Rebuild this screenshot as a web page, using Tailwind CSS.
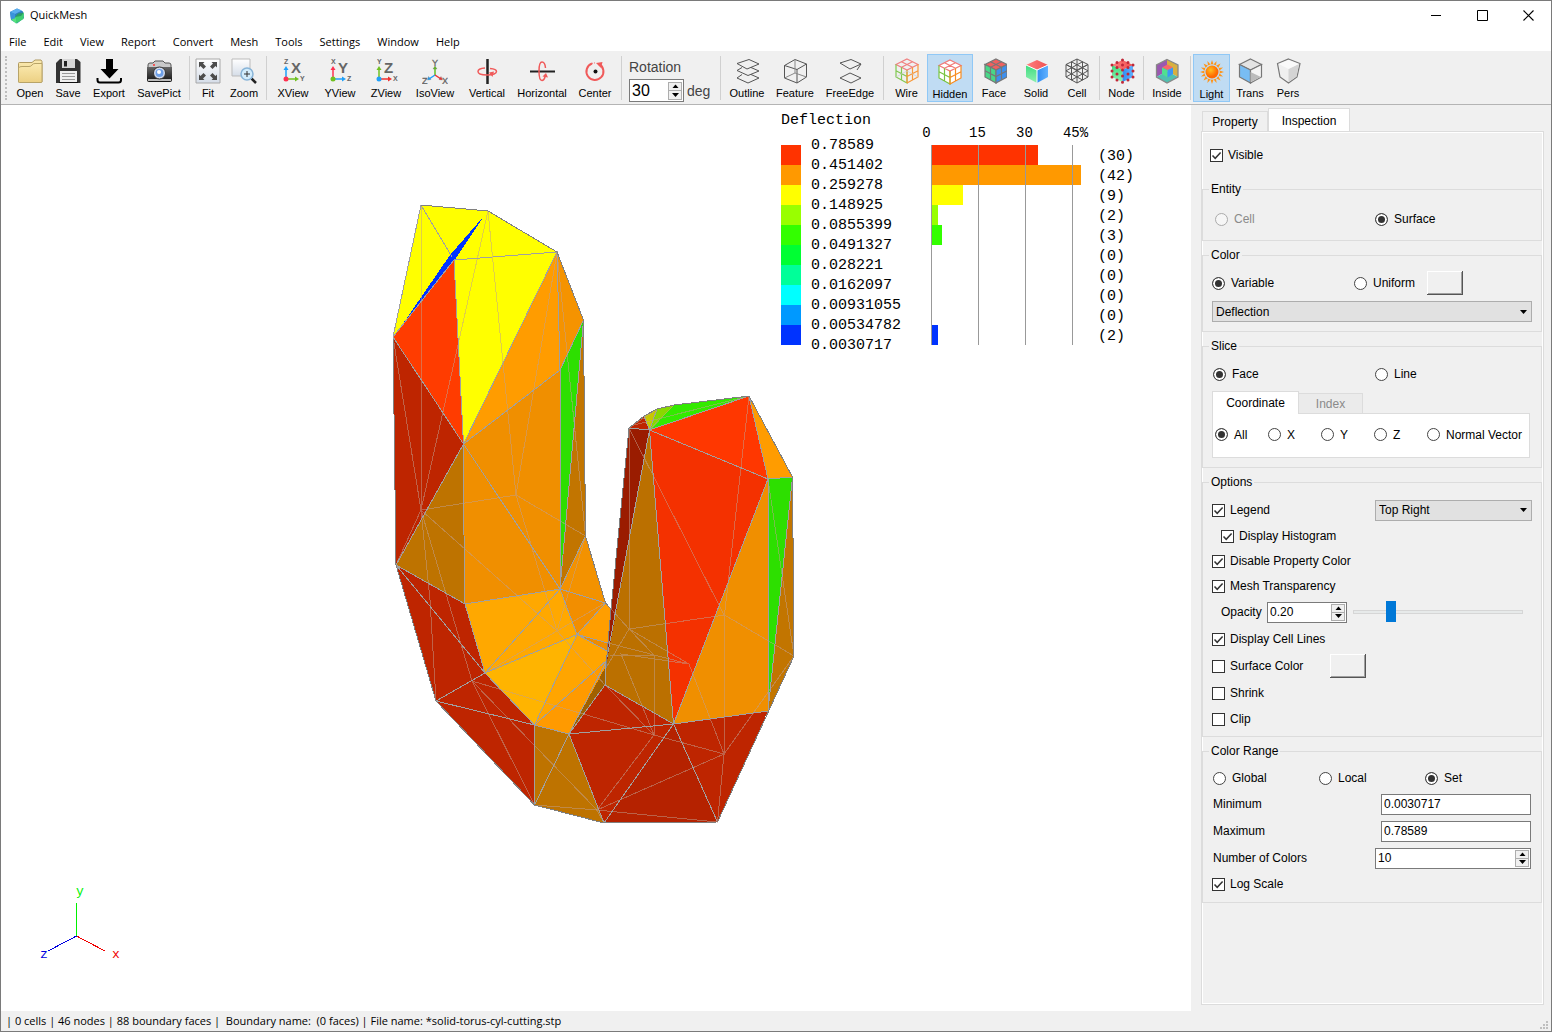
<!DOCTYPE html>
<html lang="en">
<head>
    <meta charset="UTF-8">
    <title>QuickMesh</title>
    <script src="https://cdn.jsdelivr.net/npm/@tailwindcss/browser@4"></script>
</head>
<body class="h-screen flex flex-col border border-[#7a7a7a] bg-white text-black text-xs font-['Liberation_Sans',Arial,sans-serif] overflow-hidden">

    <!-- Shared symbols -->
    <svg class="absolute h-0 w-0" aria-hidden="true">
        <symbol id="check" viewBox="0 0 13 13"><path d="M2.5 6.5 L5.2 9.3 L10.6 3.6" fill="none" stroke="#333" stroke-width="1.5"/></symbol>
        <symbol id="up" viewBox="0 0 7 4"><path d="M0.5 4 L3.5 0.5 L6.5 4z"/></symbol>
        <symbol id="down" viewBox="0 0 7 4"><path d="M0 0 L7 0 L3.5 4z"/></symbol>
        <linearGradient id="folder" x2="0" y2="1"><stop stop-color="#fbeab0"/><stop offset="1" stop-color="#ecd083"/></linearGradient>
        <linearGradient id="camera" x2="0" y2="1"><stop stop-color="#666"/><stop offset="1" stop-color="#111"/></linearGradient>
        <linearGradient id="paper" x2="0" y2="1"><stop stop-color="#fff"/><stop offset="1" stop-color="#d5dde8"/></linearGradient>
        <linearGradient id="red" x1="0" x2="1"><stop stop-color="#ff8080"/><stop offset="1" stop-color="#f05050"/></linearGradient>
        <linearGradient id="green" x2="0" y2="1"><stop stop-color="#3fdc80"/><stop offset="1" stop-color="#8ff0b0"/></linearGradient>
        <linearGradient id="blue" x2="1"><stop stop-color="#2f8cf0"/><stop offset="1" stop-color="#62b2ff"/></linearGradient>
        <radialGradient id="sun" cx=".4" cy=".35"><stop stop-color="#ffc020"/><stop offset="1" stop-color="#ff6a00"/></radialGradient>
    </svg>

    <!-- Title bar -->
    <header class="flex h-[29px] shrink-0 items-center font-['Open_Sans',sans-serif]">
        <svg class="ml-2 h-4 w-4" viewBox="0 0 16 16">
            <path d="M1 4 L8 0.5 L14 3.5 L15 10 L8 15.5 L2 12z" fill="#2f7fc0"/>
            <path d="M1 4 L8 0.5 L13 2.5 L6 6z" fill="#5aaef0"/>
            <path d="M1 4 L6 6 L6 11 L2 11z" fill="#3a94dc"/>
            <path d="M6 9 L15 5 L14.5 11 L7 15.5z" fill="#3fd070"/>
            <path d="M6 9 L9 5.5 L15 4.5 L12 8z" fill="#2b9a66"/>
            <path d="M2 11.5 L7 10 L7 15.5z" fill="#55e080"/>
        </svg>
        <h1 class="ml-[5px] flex-1 text-[11px]">QuickMesh</h1>
        <button aria-label="Minimize" class="flex h-full w-[46px] items-center justify-center"><svg class="h-[11px] w-[11px]" viewBox="0 0 11 11"><path d="M0 5.5 H10" stroke="#000"/></svg></button>
        <button aria-label="Maximize" class="flex h-full w-[46px] items-center justify-center"><svg class="h-[11px] w-[11px]" viewBox="0 0 11 11"><path d="M.5 .5 H10.500 V10.500 H.5z" fill="none" stroke="#000"/></svg></button>
        <button aria-label="Close" class="flex h-full w-[46px] items-center justify-center"><svg class="h-[11px] w-[11px]" viewBox="0 0 11 11"><path d="M.5 .5 L10.500 10.500 M10.500 .5 L.5 10.500" stroke="#000" stroke-width="1.100"/></svg></button>
    </header>

    <!-- Menu bar -->
    <nav class="flex h-[22px] shrink-0 items-center gap-[17px] border-b border-[#f0f0f0] pt-[3px] pl-2 font-['Open_Sans',sans-serif] text-[11px]">
        <button>File</button>
        <button>Edit</button>
        <button>View</button>
        <button>Report</button>
        <button>Convert</button>
        <button>Mesh</button>
        <button>Tools</button>
        <button>Settings</button>
        <button>Window</button>
        <button>Help</button>
    </nav>

    <!-- Toolbar -->
    <div class="flex h-[53px] shrink-0 border-b border-[#b4b4b4] bg-[#f0f0f0] pt-0.5 text-[11px] leading-3 [&>button]:flex [&>button]:h-12 [&>button]:shrink-0 [&>button]:flex-col [&>button]:items-center [&>button]:gap-[3px] [&>button]:pt-1 [&>button>svg]:h-[26px] [&>button>svg]:w-[26px] [&>hr]:mx-0.5 [&>hr]:mt-0.5 [&>hr]:h-11 [&>hr]:w-px [&>hr]:shrink-0 [&>hr]:border-0 [&>hr]:bg-[#d0d0d0]">
        <div class="mr-1 ml-1 mt-0.5 h-11 w-0.5 shrink-0 border-l-2 border-dotted border-[#bdbdbd]"></div>
        <button class="w-[38px]">
            <svg viewBox="0 0 26 26"><path d="M1.500 24 V5.500 Q1.500 4.500 2.500 4.500 H15 L18 2 H24 L25 3.500 V24z" fill="url(#folder)" stroke="#b09a60"/><path d="M1.500 10 Q2 8.500 5 8.500 H12 Q14 8.500 15 7 Q16 5.500 18 5.500 H25 V23.500 Q25 24.500 24 24.500 H2.500 Q1.500 24.500 1.500 23.500z" fill="url(#folder)" stroke="#b8a468"/></svg>
            Open
        </button>
        <button class="w-[38px]">
            <svg viewBox="0 0 26 26"><path d="M1 1 H22 L25.500 4 V25 H1z M1 1 L4 1 V25 H1z" fill="#333"/><path d="M1 1 H5 L1 5z" fill="#f0f0f0"/><path d="M7 1 H20 V10 H7z" fill="#d8d8d8"/><path d="M9 3 H12 V8.500 H9z" fill="#222"/><path d="M5 13 H22 V25 H5z" fill="#efefef"/><path d="M7 15.500 H20 M7 18.500 H20 M7 21.500 H20" stroke="#999"/><path d="M4 24.500 H23" stroke="#111"/></svg>
            Save
        </button>
        <button class="w-11">
            <svg viewBox="0 0 26 26"><path d="M10 1 H17 V11 H22.500 L13.500 20.500 L4.500 11 H10z"/><path d="M1.500 20 V22 Q1.500 24.500 4 24.500 H22.500 Q25 24.500 25 22 V20" fill="none" stroke="#000" stroke-width="2"/></svg>
            Export
        </button>
        <button class="w-14">
            <svg viewBox="0 0 26 26"><path d="M2 7 Q2 5 4 5 H7 L9 3 H17 L19 5 H23 Q25 5 25 7 V12 H2z" fill="#c9c9c9" stroke="#555"/><path d="M1 9 H26 V22 Q26 24 24 24 H3 Q1 24 1 22z" fill="url(#camera)"/><path d="M2 21 H25 V23 H2z" fill="#bbb"/><circle cx="13.500" cy="15" r="6" fill="#d4dcec" stroke="#333"/><circle cx="13.500" cy="15" r="4" fill="#6ea0e8"/><circle cx="13" cy="14" r="2" fill="#fff"/><circle cx="8" cy="7" r="1" fill="#f33"/></svg>
            SavePict
        </button>
        <hr>
        <button class="w-8">
            <svg viewBox="0 0 26 26"><path d="M1 1 H25 V25 H1z" fill="url(#paper)" stroke="#a8a8a8"/><path d="M4 4 H9.500 L8 5.500 L11 8.500 L8.500 11 L5.500 8 L4 9.500z M22 4 H16.500 L18 5.500 L15 8.500 L17.500 11 L20.500 8 L22 9.500z M4 22 H9.500 L8 20.500 L11 17.500 L8.500 15 L5.500 18 L4 16.500z M22 22 H16.500 L18 20.500 L15 17.500 L17.500 15 L20.500 18 L22 16.500z" fill="#4c4c4c"/></svg>
            Fit
        </button>
        <button class="w-10">
            <svg viewBox="0 0 26 26"><path d="M1 1 H19 V18 H1z" fill="url(#paper)" stroke="#bbb"/><path d="M20.500 20.500 L25 25" stroke="#222" stroke-width="2.500"/><circle cx="16" cy="16" r="6" fill="#d2ecfc" stroke="#88b4d8" stroke-width="1.500"/><path d="M13 16 H19 M16 13 V19" stroke="#333"/></svg>
            Zoom
        </button>
        <hr>
        <button class="w-12">
            <svg viewBox="0 0 26 26" class="font-bold" fill="#666"><path d="M6 21 V12" stroke="#20a0f8" stroke-width="1.500"/><path d="M3.500 12 L6 8 L8.500 12z" fill="#20a0f8"/><path d="M6 21 H15" stroke="#70c020" stroke-width="1.500"/><path d="M15 18.500 L19 21 L15 23.500z" fill="#70c020"/><circle cx="6" cy="21" r="2.500" fill="#ff3050"/><text x="11" y="15" font-size="15">X</text><text x="4" y="6" font-size="7">Z</text><text x="20" y="23" font-size="7">Y</text></svg>
            XView
        </button>
        <button class="w-[46px]">
            <svg viewBox="0 0 26 26" class="font-bold" fill="#666"><path d="M6 21 V12" stroke="#ff3050" stroke-width="1.500"/><path d="M3.500 12 L6 8 L8.500 12z" fill="#ff3050"/><path d="M6 21 H15" stroke="#20a0f8" stroke-width="1.500"/><path d="M15 18.500 L19 21 L15 23.500z" fill="#20a0f8"/><circle cx="6" cy="21" r="2.500" fill="#70c020"/><text x="11" y="15" font-size="15">Y</text><text x="4" y="6" font-size="7">X</text><text x="20" y="23" font-size="7">Z</text></svg>
            YView
        </button>
        <button class="w-[46px]">
            <svg viewBox="0 0 26 26" class="font-bold" fill="#666"><path d="M6 21 V12" stroke="#70c020" stroke-width="1.500"/><path d="M3.500 12 L6 8 L8.500 12z" fill="#70c020"/><path d="M6 21 H15" stroke="#f03030" stroke-width="1.500"/><path d="M15 18.500 L19 21 L15 23.500z" fill="#f03030"/><circle cx="6" cy="21" r="2.500" fill="#20a0f8"/><text x="11" y="15" font-size="15">Z</text><text x="4" y="6" font-size="7">Y</text><text x="20" y="23" font-size="7">X</text></svg>
            ZView
        </button>
        <button class="w-13">
            <svg viewBox="0 0 26 26" fill="#666" stroke="#666" stroke-width=".3"><path d="M13 17 V10" stroke="#60c020" stroke-width="1.500"/><path d="M11 11 L13 8 L15 11z" fill="#60c020"/><path d="M13 17 L7 21" stroke="#20a0f8" stroke-width="1.500"/><path d="M5.500 22 L6.500 18.500 L9 21.500z" fill="#20a0f8"/><path d="M13 17 L19 21" stroke="#f03030" stroke-width="1.500"/><path d="M20.500 22 L17 21.500 L19 18.500z" fill="#f03030"/><text x="10" y="7.500" font-size="9">Y</text><text x="0" y="25.500" font-size="9">Z</text><text x="20" y="25.500" font-size="9">X</text></svg>
            IsoView
        </button>
        <button class="w-13">
            <svg viewBox="0 0 26 26" fill="none"><path d="M13.500 1 V26" stroke="#222" stroke-width="2.500"/><path d="M11 10 Q4 10.500 4 13.500 Q4 17 13 17 Q18 17 20 16 M16 10.500 Q22.500 11 22.500 13.500 Q22.500 15 20 16" stroke="#f05a5a" stroke-width="1.500"/><path d="M15 14.500 L20 13.500 L18.500 19z" fill="#f05a5a"/></svg>
            Vertical
        </button>
        <button class="w-[58px]">
            <svg viewBox="0 0 26 26" fill="none"><path d="M1 13.500 H26" stroke="#222" stroke-width="2"/><path d="M16.500 10 Q16 4 13 4 Q10 4 10 13 Q10 22.500 13 22.500 Q15 22.500 16 19 M16.500 17 L16 19" stroke="#f05a5a" stroke-width="1.500"/><path d="M13.500 18.500 L17 15 L19 19.500z" fill="#f05a5a"/></svg>
            Horizontal
        </button>
        <button class="w-12">
            <svg viewBox="0 0 26 26" fill="none"><path d="M17 6 A8.500 8.500 0 1 1 10 5.500" stroke="#f05a5a" stroke-width="2"/><path d="M14 5 L20.500 4 L19 10z" fill="#f05a5a"/><path d="M10 5.500 A8.500 8.500 0 0 1 14 5" stroke="#f05a5a" stroke-dasharray="1 1"/><circle cx="13.500" cy="13.500" r="2" fill="#111"/></svg>
            Center
        </button>
        <hr>
        <!-- Rotation step -->
        <div class="flex w-[94px] shrink-0 flex-col pl-[5px] text-sm text-[#444]">
            <label for="rotation" class="h-[25px] leading-[26px]">Rotation</label>
            <div class="flex items-center gap-[3px]">
                <div class="flex h-[23px] w-[55px] items-center border border-[#7a7a7a] bg-white pr-px">
                    <input id="rotation" type="text" value="30" class="w-full min-w-0 flex-1 pl-0.5 text-base text-black outline-none">
                    <div class="flex w-3.5 shrink-0 flex-col">
                        <button aria-label="Increase rotation" class="flex h-[9px] items-center justify-center border border-[#adadad] bg-[#f0f0f0]"><svg class="h-1 w-[7px]"><use href="#up"/></svg></button>
                        <button aria-label="Decrease rotation" class="flex h-[9px] items-center justify-center border border-t-0 border-[#adadad] bg-[#f0f0f0]"><svg class="h-1 w-[7px]"><use href="#down"/></svg></button>
                    </div>
                </div>
                <span>deg</span>
            </div>
        </div>
        <hr>
        <button class="w-12">
            <svg viewBox="0 0 26 26" fill="none" stroke="#555"><path d="M3 5.500 L15 1.500 L25 6 L13 11z M8 9.500 L3 12.500 L14 17.500 L25 13 L17 9.500 M8 16.500 L3 20 L14 25 L25 20 L17 16.500"/></svg>
            Outline
        </button>
        <button class="w-12">
            <svg viewBox="0 0 26 26" fill="none" stroke="#555"><path d="M2.500 7.500 L13 1.500 L24.500 6 L15 11.500z M2.500 7.500 V20 L15 25 V11.500 M24.500 6 V19 L15 25"/><path d="M13 1.500 V15 L2.500 20 M13 15 L24.500 19" stroke="#888"/></svg>
            Feature
        </button>
        <button class="w-[62px]">
            <svg viewBox="0 0 26 26" fill="none" stroke="#555"><path d="M3 5 L14 1.500 L24 6 L13 11z M3 20 L13 15 L24 20 L14 25z M24 6 L20 12"/></svg>
            FreeEdge
        </button>
        <hr>
        <button class="w-[41px]">
            <svg viewBox="0 0 26 26" fill="none" stroke-width="1.200"><path d="M13 1 L24 6.500 L13 12 L2 6.500z" stroke="#f08080"/><path d="M7.500 3.800 L18.500 9.300 M18.500 3.800 L7.500 9.300" stroke="#f08080"/><path d="M2 6.500 V19 L13 25 V12 M7.500 9.300 V22 M2 12.800 L13 18.500" stroke="#80c850"/><path d="M24 6.500 V19 L13 25 M13 12 V25 M18.500 9.300 V22 M24 12.800 L13 18.500" stroke="#f89838"/><path d="M2 19 L13 13 L24 19" stroke="#ccc" stroke-width=".7"/></svg>
            Wire
        </button>
        <button aria-pressed="true" class="w-[46px] border border-[#90c8f6] bg-[#c0dcf3]">
            <svg viewBox="0 0 26 26" fill="#fff" stroke-width="1.200"><path d="M2 6.500 L13 1 L24 6.500 V19 L13 25 L2 19z"/><path d="M13 1 L24 6.500 L13 12 L2 6.500z M7.500 3.800 L18.500 9.300 M18.500 3.800 L7.500 9.300" stroke="#f07878"/><path d="M2 6.500 V19 L13 25 V12 M7.500 9.300 V22 M2 12.800 L13 18.500" fill="none" stroke="#78c440"/><path d="M24 6.500 V19 L13 25 V12 M18.500 9.300 V22 M24 12.800 L13 18.500" fill="none" stroke="#f88c20"/></svg>
            Hidden
        </button>
        <button class="w-[42px]">
            <svg viewBox="0 0 26 26" stroke="#777" stroke-width="1.200"><path d="M15 1 L26 6.500 L15 12 L4 6.500z" fill="#f06060"/><path d="M4 6.500 L15 12 V25 L4 19z" fill="#48d888"/><path d="M26 6.500 L15 12 V25 L26 19z" fill="#3c90f0"/><path d="M9.500 3.800 L20.500 9.300 V22 M20.500 3.800 L9.500 9.300 V22 M4 12.800 L15 18.500 L26 12.800" fill="none"/></svg>
            Face
        </button>
        <button class="w-[42px]">
            <svg viewBox="0 0 26 26"><path d="M14 2 L25 7 L14 12 L3 7z" fill="url(#red)"/><path d="M3 7 L14 12 V25 L3 19z" fill="url(#green)"/><path d="M25 7 L14 12 V25 L25 19z" fill="url(#blue)"/><path d="M3 7 L14 12 L25 7 M14 12 V25" fill="none" stroke="#fff"/></svg>
            Solid
        </button>
        <button class="w-10">
            <svg viewBox="0 0 26 26" fill="none" stroke="#555"><path d="M13 1 L24 6.500 V19 L13 25 L2 19 V6.500z M2 6.500 L13 12 L24 6.500 M13 1 V25 M7.500 3.800 V22 M18.500 3.800 V22 M7.500 3.800 L24 12.800 M18.500 3.800 L2 12.800 M2 12.800 L18.500 22 M24 12.800 L7.500 22 M2 19 L24 6.500 M24 19 L2 6.500"/></svg>
            Cell
        </button>
        <hr>
        <button class="w-[39px]">
            <svg viewBox="0 0 26 26"><path d="M13.500 2 L24 7 L13.500 12 L3 7z" fill="url(#red)"/><path d="M3 7 L13.500 12 V24 L3 19z" fill="url(#green)"/><path d="M24 7 L13.500 12 V24 L24 19z" fill="url(#blue)"/><path d="M13.500 2h0M8 4.500h0M19 4.500h0M3 7h0M13.500 7h0M24 7h0M8 9.500h0M19 9.500h0M13.500 12h0M3 13h0M24 13h0M8 16h0M19 16h0M13.500 18h0M3 19h0M24 19h0M8 22h0M19 22h0M13.500 24.300h0" stroke="#c02838" stroke-width="3" stroke-linecap="round"/></svg>
            Node
        </button>
        <hr>
        <button class="w-[42px]">
            <svg viewBox="0 0 26 26"><path d="M13 1.500 L2.500 7 V19 L13 13z" fill="#9a58b0"/><path d="M13 1.500 L24 7 V19 L13 13z" fill="#d8b040"/><path d="M2.500 19 L13 13 L24 19 L13 25z" fill="#50c0b0"/><path d="M13 1.500 L24 7 V19 L13 25 L2.500 19 V7z" fill="none" stroke="#888" stroke-width="1.300"/><path d="M13.500 6.500 L19 9.500 L13.500 12 L8 9.500z" fill="#f86868"/><path d="M8 9.500 L13.500 12 V19.500 L8 16z" fill="#50e090"/><path d="M19 9.500 L13.500 12 V19.500 L19 16z" fill="#3c98f4"/></svg>
            Inside
        </button>
        <hr>
        <button aria-pressed="true" class="w-[37px] border border-[#90c8f6] bg-[#c0dcf3]">
            <svg viewBox="0 0 26 26" fill="#ff9418"><path d="M13 1 L14.500 5.500 H11.500z M13 25 L14.500 20.500 H11.500z M1 13 L5.500 11.500 V14.500z M25 13 L20.500 11.500 V14.500z M4.500 4.500 L9 6.800 L6.800 9z M21.500 4.500 L19.200 9 L17 6.800z M4.500 21.500 L6.800 17 L9 19.200z M21.500 21.500 L17 19.200 L19.200 17z M8.400 1.900 L11.500 5.500 L9 6.600z M17.600 1.900 L14.500 5.500 L17 6.600z M8.400 24.100 L11.500 20.500 L9 19.400z M17.600 24.100 L14.500 20.500 L17 19.400z M1.900 8.400 L6.500 9 L5.500 11.500z M1.900 17.600 L6.500 17 L5.500 14.500z M24.100 8.400 L19.500 9 L20.500 11.500z M24.100 17.600 L19.500 17 L20.500 14.500z"/><circle cx="13" cy="13" r="7.500" fill="#c0dcf3"/><circle cx="13" cy="13" r="6.500" fill="url(#sun)"/></svg>
            Light
        </button>
        <button class="w-10">
            <svg viewBox="0 0 26 26" stroke="#777" stroke-width="1.200"><path d="M13.500 1 L24.500 6.500 L13.500 12 L2.500 6.500z" fill="#e4e4e4"/><path d="M2.500 6.500 L13.500 12 V25 L2.500 19z" fill="#78bdf4"/><path d="M24.500 6.500 L13.500 12 V25 L24.500 19z" fill="#f4f4f4"/><path d="M13.500 14 L24 19 L13.500 24z" fill="#bbb" stroke="none"/></svg>
            Trans
        </button>
        <button class="w-9">
            <svg viewBox="0 0 26 26"><path d="M13.500 1 L25 5.500 L22 19 L13.500 25 L5 19 L2.500 5.500z" fill="#f0f0f0" stroke="#777" stroke-width="1.200"/><path d="M13.500 11 L24 6 L21.500 18.500 L13.500 24z" fill="#d4d4d4"/><path d="M13.500 2 L23.500 6 L13.500 11 L4 6z" fill="#fafafa"/></svg>
            Pers
        </button>
    </div>

    <div class="flex min-h-0 flex-1">
        <!-- 3D viewport -->
        <main class="relative min-w-0 flex-1 overflow-hidden bg-white">
            <svg class="h-[906px] w-[1190px]" viewBox="1 105 1190 906" role="img" aria-label="Mesh model" shape-rendering="crispEdges">
                <!-- left column -->
                <g>
                    <path d="M421 205 L488 211 L557 252 L463.500 444 L454 260 L393 337z" fill="#ffff00"/>
                    <path d="M484 216 L450 255 L398 331 L454 261z" fill="#0034ff"/>
                    <path d="M393 337 L454 260 L463.500 444z" fill="#ff3c00"/>
                    <path d="M393 337 L463.500 444 L396 565z" fill="#be2500"/>
                    <path d="M463.500 444 L465 604 L396 565z" fill="#be7300"/>
                    <path d="M463.500 444 L557 252 L560 370z" fill="#ff9c00"/>
                    <path d="M557 252 L583.500 320 L560 370z" fill="#f59300"/>
                    <path d="M463.500 444 L560 370 V589 L465 604z" fill="#f08f00"/>
                    <path d="M583.500 320 L585.500 537 L560 589z" fill="#c27500"/>
                    <path d="M583.500 320 L560 370 V589z" fill="#2ddf00"/>
                    <path d="M560 589 L585.500 536 L605.500 603z" fill="#f39200"/>
                    <path d="M560 589 L605.500 603 L577 634.500z" fill="#f28e00"/>
                    <path d="M605.500 603 L611 609 L608 643 L577 634.500z" fill="#ff9e00"/>
                    <path d="M577 634.500 L609 643 L607 652z" fill="#ee8c00"/>
                    <path d="M465 604 L560 589 L577 634.500 L485 673z" fill="#ffa800"/>
                    <path d="M485 673 L577 634.500 L534.500 725z" fill="#ffb400"/>
                    <path d="M577 634.500 L607 651 V661 L534.500 725z" fill="#ffa500"/>
                    <path d="M534.500 725 L607 660 L606 668 L569 734z" fill="#ff9a00"/>
                    <path d="M396 565 L465 604 L485 673 L534.500 725 V805 L436 701z" fill="#be2500"/>
                    <path d="M534.500 725 L569 734 L604 823 L534.500 805z" fill="#be7300"/>
                </g>
                <!-- right column -->
                <g>
                    <path d="M569 734 L606 666 L605 685z" fill="#a06000"/>
                    <path d="M629 428 L649.500 430 L606 668 L608 643z" fill="#9a1c00"/>
                    <path d="M629 428 L644 416 L649.500 430z" fill="#be2500"/>
                    <path d="M644 416 L657 409 L649.500 430z" fill="#c8c800"/>
                    <path d="M657 409 L674 405 L649.500 430z" fill="#88d800"/>
                    <path d="M674 405 L749 396 L649.500 430z" fill="#33ea00"/>
                    <path d="M649.500 430 L673.500 724 L605 685 L606 667z" fill="#bb7000"/>
                    <path d="M649.500 430 L749 396 L768 479z" fill="#ff3700"/>
                    <path d="M649.500 430 L768 479 L673.500 724z" fill="#f43100"/>
                    <path d="M749 396 L792.500 477 L768 479z" fill="#ff9c00"/>
                    <path d="M768 479 V711 L673.500 724z" fill="#f08f00"/>
                    <path d="M792.500 477 L794 656 L768 711z" fill="#c27500"/>
                    <path d="M768 479 L792.500 477 L768 711z" fill="#2ddf00"/>
                    <path d="M569 734 L605 685 L673.500 724 L768 711 L717.500 822 L604 823z" fill="#be2500"/>
                    <path d="M673.500 724 L717.500 822 L604 823z" fill="#b52200"/>
                </g>
                <!-- lines seen through the faces -->
                <g fill="none" stroke="#c0a090" stroke-opacity=".5">
                    <path d="M421 205 V510 M488 211 L421 510 M488 211 L516 495 M557 252 L516 495 M557 252 L585.500 536 M393 337 L421 510 L396 565 M421 510 L516 495 L585.500 536 L557 631 L516 495 M421 510 L557 631 M421 510 L430 600 L436 701 M421 510 L472 681 M557 631 L485 673 M557 631 L605 603 M557 631 L605 685 M472 681 L654 735 M472 681 L534.500 805 M472 681 L597 810"/>
                    <path d="M629 428 V629 L724.500 615 L794 656 L724 754 V615 L629 428 M724.500 615 L749 396 M768 479 L794 656 M654 655 V735 L724 754 L689 664 L629 629 L654 655 L610 655 M629 629 L606 668 M611 609 L629 629 M654 735 L605 685 M654 735 L621 654 L689 664 L608 643 M654 735 L597 810 L724 754 L717.500 822 L597 810 L534.500 805 M597 810 L604 823 M629 428 L657 409 M649.500 430 L674 405 M634 425 L749 396"/>
                </g>
                <!-- mesh edges -->
                <g fill="none" stroke="#a0a0a0">
                    <path d="M421 205 L393 337 L454 260 L557 252 L463.500 444 L454 260 M421 205 L452 257 M393 337 L463.500 444 L560 370 L557 252 M560 370 L583.500 320 M396 565 L463.500 444 V500 L465 604 L396 565 L485 673 L465 604 L560 589 L463.500 444 M560 370 V589 L583.500 320 M560 589 L585.500 536 M605.500 603 L560 589 L577 634.500 L605.500 603 M560 589 L485 673 L577 634.500 L608 643 M577 634.500 L607 651 M577 634.500 L534.500 725 L607 660 M485 673 L534.500 725 L569 734 L607 660 M485 673 L436 701 L534.500 725 V805 L569 734 L605 685"/>
                    <path d="M569 734 L604 823 L673.500 724 L717.500 822 M569 734 L673.500 724 L605 685 V668 L649.500 430 L673.500 724 L768 711 V479 L673.500 724 M629 428 L649.500 430 L749 396 L768 479 L649.500 430 L644 416 M657 409 L649.500 430 M768 479 L792.500 477 L768 711"/>
                </g>
                <path d="M421 205 L488 211 L557 252 L583.500 320 L585.500 536 L605.500 603 L611 609 L629 428 L644 416 L657 409 L674 405 L749 396 L792.500 477 L794 656 L717.500 822 L604 823 L534.500 805 L436 701 L396 565 L393 337 M611 609 L608 643 L606 668" fill="none" stroke="#808080"/>
                <!-- axes -->
                <path d="M76.500 903 V936" stroke="#00f000"/>
                <path d="M76.500 936 L105 951" stroke="#f00000"/>
                <path d="M76.500 936 L48 951" stroke="#0000e0"/>
                <g class="font-['Liberation_Mono',monospace] text-[13px]" text-anchor="middle">
                    <text x="80" y="895" fill="#00f000">y</text>
                    <text x="116" y="958" fill="#f00000">x</text>
                    <text x="44" y="958" fill="#0000e0">z</text>
                </g>
            </svg>

            <!-- Legend and histogram -->
            <div class="absolute top-1.5 right-[60px] flex font-['Liberation_Mono',monospace] text-[15px] leading-5">
                <div class="w-[150px]">
                    <p class="mb-[5px]">Deflection</p>
                    <div class="flex gap-2.5">
                        <div class="mt-[9px] w-5 [&>div]:h-5">
                            <div class="bg-[#ff3300]"></div>
                            <div class="bg-[#ff9900]"></div>
                            <div class="bg-[#ffff00]"></div>
                            <div class="bg-[#99ff00]"></div>
                            <div class="bg-[#33ff00]"></div>
                            <div class="bg-[#00ff33]"></div>
                            <div class="bg-[#00ff99]"></div>
                            <div class="bg-[#00ffff]"></div>
                            <div class="bg-[#0099ff]"></div>
                            <div class="bg-[#0033ff]"></div>
                        </div>
                        <ul>
                            <li>0.78589</li>
                            <li>0.451402</li>
                            <li>0.259278</li>
                            <li>0.148925</li>
                            <li>0.0855399</li>
                            <li>0.0491327</li>
                            <li>0.028221</li>
                            <li>0.0162097</li>
                            <li>0.00931055</li>
                            <li>0.00534782</li>
                            <li>0.0030717</li>
                        </ul>
                    </div>
                </div>
                <div class="w-[167px] pt-3">
                    <div class="-ml-6 mb-0.5 flex text-sm leading-5 [&>span]:w-[47px] [&>span]:shrink-0 [&>span]:text-center">
                        <span class="pr-2">0</span><span>15</span><span>30</span><span class="pl-2">45%</span>
                    </div>
                    <div class="relative h-[200px] [&>div]:h-5">
                        <div class="bg-[#ff3300]" style="width: 107px"></div>
                        <div class="bg-[#ff9900]" style="width: 150px"></div>
                        <div class="bg-[#ffff00]" style="width: 32px"></div>
                        <div class="bg-[#99ff00]" style="width: 7px"></div>
                        <div class="bg-[#33ff00]" style="width: 11px"></div>
                        <div></div>
                        <div></div>
                        <div></div>
                        <div></div>
                        <div class="bg-[#0033ff]" style="width: 7px"></div>
                        <svg class="absolute inset-0 h-full w-[150px]"><path d="M.5 0 V200 M47.500 0 V200 M94.500 0 V200 M141.500 0 V200" stroke="#999"/></svg>
                    </div>
                </div>
                <ul class="w-[33px] pt-9">
                    <li>(30)</li>
                    <li>(42)</li>
                    <li>(9)</li>
                    <li>(2)</li>
                    <li>(3)</li>
                    <li>(0)</li>
                    <li>(0)</li>
                    <li>(0)</li>
                    <li>(0)</li>
                    <li>(2)</li>
                </ul>
            </div>
        </main>

        <!-- Inspection panel -->
        <aside class="flex w-[360px] shrink-0 flex-col bg-[#f0f0f0] pt-[3px] pr-[7px] pb-1.5 pl-2.5 leading-4 [&_label]:flex [&_label]:items-center [&_label]:whitespace-nowrap [&_input[type=radio]]:h-[13px] [&_input[type=radio]]:w-[13px] [&_input[type=radio]]:shrink-0 [&_input[type=radio]]:appearance-none [&_input[type=radio]]:rounded-full [&_input[type=radio]]:border [&_input[type=radio]]:border-[#444] [&_input[type=radio]]:bg-white [&_input[type=radio]]:mr-1.5 [&_input[type=radio]:checked]:bg-[#333] [&_input[type=radio]:checked]:shadow-[inset_0_0_0_2px_#fff] [&_input[type=checkbox]]:h-[13px] [&_input[type=checkbox]]:w-[13px] [&_input[type=checkbox]]:appearance-none [&_input[type=checkbox]]:border [&_input[type=checkbox]]:border-[#333] [&_input[type=checkbox]]:bg-white [&_fieldset]:mb-1.5 [&_fieldset]:min-w-0 [&_fieldset]:border [&_fieldset]:border-[#dcdcdc] [&_legend]:ml-1.5 [&_legend]:px-0.5">
            <div class="flex items-end pl-px" role="tablist">
                <button role="tab" class="h-5 w-[66px] border border-b-0 border-[#dcdcdc]">Property</button>
                <button role="tab" aria-selected="true" class="-mb-px h-6 w-[82px] border border-b-0 border-[#dcdcdc] bg-white">Inspection</button>
            </div>
            <div class="flex-1 border border-[#dcdcdc] pr-px shadow-[inset_0_0_0_1px_#fff]">
                <label class="mt-[13px] mb-4 ml-2 h-5 gap-[5px]">
                    <span class="grid"><input type="checkbox" checked class="peer [grid-area:1/1]"><svg class="pointer-events-none hidden h-[13px] w-[13px] [grid-area:1/1] peer-checked:block"><use href="#check"/></svg></span>Visible
                </label>

                <fieldset class="h-[60px]">
                    <legend>Entity</legend>
                    <div class="flex pt-2.5 pl-3">
                        <label class="h-6 w-[160px] text-[#8a8a8a]"><input type="radio" name="entity" disabled class="opacity-40">Cell</label>
                        <label class="h-6"><input type="radio" name="entity" checked>Surface</label>
                    </div>
                </fieldset>

                <fieldset class="pt-2 pr-[9px] pb-[9px] pl-[9px]">
                    <legend class="-ml-[3px]!">Color</legend>
                    <div class="mb-1.5 flex items-center">
                        <label class="h-6 w-[142px]"><input type="radio" name="color" checked>Variable</label>
                        <label class="h-6 w-[73px]"><input type="radio" name="color">Uniform</label>
                        <button aria-label="Uniform color" class="h-6 w-9 border-r border-b border-[#555] shadow-[inset_1px_1px_0_#fff,inset_-1px_-1px_0_#a0a0a0]"></button>
                    </div>
                    <div class="grid items-center">
                        <select aria-label="Variable" class="h-[21px] w-full appearance-none border border-[#adadad] bg-[#e1e1e1] pl-[3px] [grid-area:1/1]"><option>Deflection</option></select>
                        <svg class="pointer-events-none mr-[5px] h-1 w-[7px] justify-self-end [grid-area:1/1]"><use href="#down"/></svg>
                    </div>
                </fieldset>

                <fieldset class="pt-2 pr-[11px] pb-[9px] pl-[9px]">
                    <legend class="-ml-[3px]!">Slice</legend>
                    <div class="mb-[5px] flex pl-px">
                        <label class="h-6 w-[162px]"><input type="radio" name="slice" checked>Face</label>
                        <label class="h-6"><input type="radio" name="slice">Line</label>
                    </div>
                    <div class="flex items-end" role="tablist">
                        <button role="tab" aria-selected="true" class="z-10 -mb-px h-[23px] w-[87px] border border-b-0 border-[#dcdcdc] bg-white">Coordinate</button>
                        <button role="tab" disabled class="h-5 w-16 border border-b-0 border-l-0 border-[#dcdcdc] bg-[#ebebeb] text-[#8a8a8a]">Index</button>
                    </div>
                    <div class="flex h-[45px] items-center border border-[#dcdcdc] bg-white pb-0.5 pl-0.5 [&>label]:w-[53px]">
                        <label><input type="radio" name="axis" checked>All</label>
                        <label><input type="radio" name="axis">X</label>
                        <label><input type="radio" name="axis">Y</label>
                        <label><input type="radio" name="axis">Z</label>
                        <label><input type="radio" name="axis">Normal Vector</label>
                    </div>
                </fieldset>

                <fieldset class="pt-[7px] pr-[9px] pb-[5px] pl-[9px]">
                    <legend class="-ml-[3px]!">Options</legend>
                    <div class="flex h-[26px] items-center justify-between">
                        <label class="gap-[5px]">
                            <span class="grid"><input type="checkbox" checked class="peer [grid-area:1/1]"><svg class="pointer-events-none hidden h-[13px] w-[13px] [grid-area:1/1] peer-checked:block"><use href="#check"/></svg></span>Legend
                        </label>
                        <div class="grid w-[157px] items-center">
                            <select aria-label="Legend position" class="h-[21px] w-full appearance-none border border-[#adadad] bg-[#e1e1e1] pl-[3px] [grid-area:1/1]"><option>Top Right</option></select>
                            <svg class="pointer-events-none mr-[5px] h-1 w-[7px] justify-self-end [grid-area:1/1]"><use href="#down"/></svg>
                        </div>
                    </div>
                    <label class="h-[26px] gap-[5px] pl-[9px]">
                        <span class="grid"><input type="checkbox" checked class="peer [grid-area:1/1]"><svg class="pointer-events-none hidden h-[13px] w-[13px] [grid-area:1/1] peer-checked:block"><use href="#check"/></svg></span>Display Histogram
                    </label>
                    <label class="h-6 gap-[5px]">
                        <span class="grid"><input type="checkbox" checked class="peer [grid-area:1/1]"><svg class="pointer-events-none hidden h-[13px] w-[13px] [grid-area:1/1] peer-checked:block"><use href="#check"/></svg></span>Disable Property Color
                    </label>
                    <label class="h-[26px] gap-[5px]">
                        <span class="grid"><input type="checkbox" checked class="peer [grid-area:1/1]"><svg class="pointer-events-none hidden h-[13px] w-[13px] [grid-area:1/1] peer-checked:block"><use href="#check"/></svg></span>Mesh Transparency
                    </label>
                    <div class="flex h-[26px] items-center pl-[9px]">
                        <label for="opacity" class="w-[46px]">Opacity</label>
                        <div class="flex h-[21px] w-20 items-center border border-[#7a7a7a] bg-white pr-px">
                            <input id="opacity" type="text" value="0.20" class="w-full min-w-0 flex-1 pl-0.5 outline-none">
                            <div class="flex w-3.5 shrink-0 flex-col">
                                <button aria-label="Increase opacity" class="flex h-[9px] items-center justify-center border border-[#adadad] bg-[#f0f0f0]"><svg class="h-1 w-[7px]"><use href="#up"/></svg></button>
                                <button aria-label="Decrease opacity" class="flex h-2 items-center justify-center border border-t-0 border-[#adadad] bg-[#f0f0f0]"><svg class="h-1 w-[7px]"><use href="#down"/></svg></button>
                            </div>
                        </div>
                        <input type="range" aria-label="Opacity slider" min="0" max="1" step="0.01" value="0.2" class="ml-1.5 h-[21px] w-[170px] appearance-none bg-transparent [&::-webkit-slider-runnable-track]:h-1 [&::-webkit-slider-runnable-track]:border [&::-webkit-slider-runnable-track]:border-[#d6d6d6] [&::-webkit-slider-runnable-track]:bg-[#e7eaea] [&::-webkit-slider-thumb]:-mt-2.5 [&::-webkit-slider-thumb]:h-[21px] [&::-webkit-slider-thumb]:w-2.5 [&::-webkit-slider-thumb]:appearance-none [&::-webkit-slider-thumb]:bg-[#0078d7]">
                    </div>
                    <label class="h-7 gap-[5px]">
                        <span class="grid"><input type="checkbox" checked class="peer [grid-area:1/1]"><svg class="pointer-events-none hidden h-[13px] w-[13px] [grid-area:1/1] peer-checked:block"><use href="#check"/></svg></span>Display Cell Lines
                    </label>
                    <div class="flex h-[26px] items-center">
                        <label class="w-[118px] gap-[5px]"><input type="checkbox">Surface Color</label>
                        <button aria-label="Surface color" class="h-6 w-9 border-r border-b border-[#555] shadow-[inset_1px_1px_0_#fff,inset_-1px_-1px_0_#a0a0a0]"></button>
                    </div>
                    <label class="h-7 gap-[5px]"><input type="checkbox">Shrink</label>
                    <label class="h-6 gap-[5px]"><input type="checkbox">Clip</label>
                </fieldset>

                <fieldset class="pt-1.5 pr-2.5 pb-[5px] pl-[9px]">
                    <legend class="-ml-[3px]!">Color Range</legend>
                    <div class="flex h-[26px] items-center pl-px [&>label]:w-[108px]">
                        <label><input type="radio" name="range">Global</label>
                        <label><input type="radio" name="range">Local</label>
                        <label><input type="radio" name="range" checked>Set</label>
                    </div>
                    <div class="flex h-[26px] items-center justify-between pl-px">
                        <label for="minimum">Minimum</label>
                        <input id="minimum" type="text" value="0.0030717" class="h-[21px] w-[150px] border border-[#7a7a7a] bg-white pl-0.5">
                    </div>
                    <div class="flex h-7 items-center justify-between pl-px">
                        <label for="maximum">Maximum</label>
                        <input id="maximum" type="text" value="0.78589" class="h-[21px] w-[150px] border border-[#7a7a7a] bg-white pl-0.5">
                    </div>
                    <div class="flex h-[26px] items-center justify-between pl-px">
                        <label for="colors">Number of Colors</label>
                        <div class="flex h-[21px] w-[156px] items-center border border-[#7a7a7a] bg-white pr-px">
                            <input id="colors" type="text" value="10" class="w-full min-w-0 flex-1 pl-0.5 outline-none">
                            <div class="flex w-3.5 shrink-0 flex-col">
                                <button aria-label="Increase colors" class="flex h-[9px] items-center justify-center border border-[#adadad] bg-[#f0f0f0]"><svg class="h-1 w-[7px]"><use href="#up"/></svg></button>
                                <button aria-label="Decrease colors" class="flex h-2 items-center justify-center border border-t-0 border-[#adadad] bg-[#f0f0f0]"><svg class="h-1 w-[7px]"><use href="#down"/></svg></button>
                            </div>
                        </div>
                    </div>
                    <label class="h-[26px] gap-[5px]">
                        <span class="grid"><input type="checkbox" checked class="peer [grid-area:1/1]"><svg class="pointer-events-none hidden h-[13px] w-[13px] [grid-area:1/1] peer-checked:block"><use href="#check"/></svg></span>Log Scale
                    </label>
                </fieldset>
            </div>
        </aside>
    </div>

    <!-- Status bar -->
    <footer class="flex h-5 shrink-0 items-center justify-between bg-[#f0f0f0] pt-px pl-[5px] font-['Open_Sans',sans-serif] text-[11px]">
        <p class="whitespace-pre">| 0 cells | 46 nodes | 88 boundary faces |  Boundary name:  (0 faces) | File name: *solid-torus-cyl-cutting.stp</p>
        <svg class="mr-[3px] mb-0.5 h-2 w-2 self-end" viewBox="0 0 8 8" fill="#bfbfbf"><path d="M6 0h2v2h-2z M3 3h2v2h-2z M6 3h2v2h-2z M0 6h2v2h-2z M3 6h2v2h-2z M6 6h2v2h-2z"/></svg>
    </footer>

</body>
</html>
